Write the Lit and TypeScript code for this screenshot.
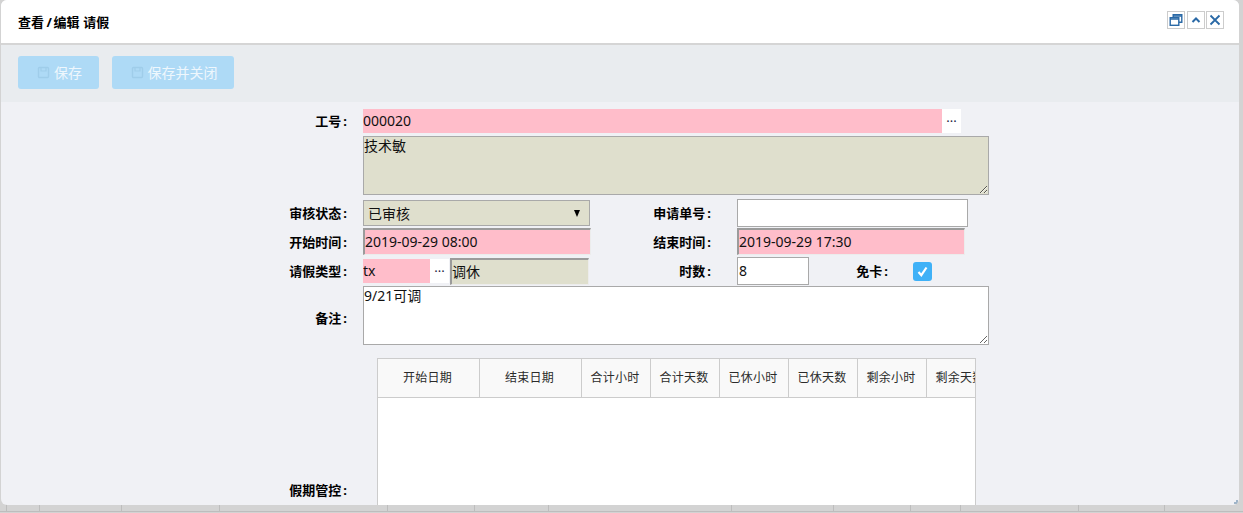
import { LitElement, html, css } from "lit";
import { customElement } from "lit/decorators.js";

const BACK_CELLS = [7, 33, 82, 98, 168, 87, 74, 183, 102, 77, 50, 118, 86, 79];
const HEADS: [string, boolean][] = [
  ["开始日期", true], ["结束日期", true], ["合计小时", false], ["合计天数", false],
  ["已休小时", false], ["已休天数", false], ["剩余小时", false], ["剩余天数", false],
];

@customElement("app-root")
export class AppRoot extends LitElement {
  static styles = css`
    :host {
      display: block;
      position: relative;
      width: 1243px;
      height: 513px;
      overflow: hidden;
      background: #d3d3d3;
      font-family: "Noto Sans", "Noto Sans CJK SC", sans-serif;
      font-size: 14px;
      color: #111;
    }
    .backdrop {
      display: flex;
      height: 511px;
      border-bottom: 1px solid #bdbdbd;
    }
    .back-cell { flex: none; border-right: 1px solid #bdbdbd; box-sizing: border-box; }
    .window {
      position: absolute;
      left: 1px;
      top: 0;
      width: 1238px;
      height: 505px;
      background: #f0f1f5;
      border-radius: 6px;
      overflow: hidden;
      display: flex;
      flex-direction: column;
    }
    .title {
      flex: none;
      height: 43px;
      box-sizing: content-box;
      background: #fff;
      border-bottom: 2px solid #d5d5d5;
      display: flex;
      align-items: center;
      justify-content: space-between;
      padding: 0 15px 0 17px;
    }
    .title-text { font-size: 13px; font-weight: 700; color: #000; word-spacing: 0.5px; }
    .slash { margin: 0 1.5px 0 2.5px; }
    .win-btns { display: flex; margin-bottom: 3px; }
    .win-btn {
      width: 16px;
      height: 16px;
      border: 1px solid #ccc;
      background: #fff;
      display: flex;
      align-items: center;
      justify-content: center;
      box-sizing: content-box;
      margin-left: 1px;
    }
    .win-btn.first { margin-left: 0; margin-right: 1px; }
    .win-btn svg { display: block; }
    .toolbar {
      flex: none;
      height: 57px;
      background: #e9ecef;
      display: flex;
      gap: 13px;
      padding: 11px 17px 0;
      box-sizing: border-box;
      align-items: flex-start;
    }
    .tool {
      height: 33px;
      background: #aedaf6;
      border-radius: 3px;
      display: flex;
      align-items: center;
      justify-content: center;
      gap: 4px;
      color: #eef7fd;
      font-size: 14px;
      padding: 0 0 0 2px;
      box-sizing: border-box;
    }
    .tool span { margin-top: -1px; }
    .tool.a { width: 81px; }
    .tool.b { width: 122px; }
    .form { flex: 1; min-height: 0; overflow: hidden; display: flex; flex-direction: column; }
    .row {
      display: grid;
      grid-template-columns: 348px 14px 227px 123px 24px 1fr;
      align-items: center;
      flex: none;
    }
    .label {
      font-size: 13px;
      font-weight: 700;
      color: #000;
      text-align: right;
      white-space: nowrap;
      padding-bottom: 2px;
    }
    .colon { margin: 0 2px; }
    .f1 { grid-column: 3; }
    .l2 { grid-column: 4; }
    .f2 { grid-column: 6; }
    .wide { grid-column: 3 / -1; }
    input, textarea, .select {
      font: inherit;
      color: #111;
      margin: 0;
      outline: none;
      box-sizing: border-box;
      display: block;
    }
    .plain { border: 1px solid #a9a9a9; background: #fff; padding: 0 1px 1px; }
    .pink { background: #ffbdca; border: none; padding: 0 0 2px; }
    .inset {
      border-style: solid;
      border-width: 2px 1px 1px 2px;
      border-color: #9b9b9b #ececec #ececec #9b9b9b;
      padding: 0 0 1px;
    }
    .inset.pinkbg { background: #ffbdca; align-self: start; }
    .inset.khaki { background: #dfdfcd; }
    .picker { display: flex; height: 24px; }
    .dots {
      width: 19px;
      background: #fff;
      display: flex;
      align-items: center;
      justify-content: center;
      font-size: 13px;
      line-height: 1;
      color: #224;
      padding-bottom: 7px;
      box-sizing: border-box;
      flex: none;
    }
    textarea {
      width: 626px;
      height: 59px;
      border: 1px solid #a9a9a9;
      padding: 0;
      line-height: 17px;
      resize: both;
      background: #fff;
    }
    textarea.khaki { background: #dfdfcd; }
    .select {
      width: 227px;
      height: 26px;
      background: #dfdfcd;
      border: 1px solid #a9a9a9;
      display: flex;
      align-items: center;
      justify-content: space-between;
      padding: 0 9px 1px 4px;
    }
    .arrow { width: 0; height: 0; border-left: 3.5px solid transparent; border-right: 3.5px solid transparent; border-top: 7px solid #000; margin-top: 1px; }
    .r1 { height: 24px; margin-top: 7px; }
    .r2 { height: 59px; margin-top: 3px; }
    .r3 { height: 28px; margin-top: 4px; }
    .r4 { height: 28px; margin-top: 1px; }
    .r5 { height: 28px; margin-top: 1px; }
    .r6 { height: 59px; margin-top: 1px; }
    .r6 .label { padding: 3px 0 0; }
    .r7 { height: 147px; margin-top: 13px; align-items: end; }
    .r7 .label { padding-bottom: 6px; }
    .mixed { display: flex; align-items: center; }
    .check-label { width: 81px; }
    .check {
      margin-left: 23px;
      width: 19px;
      height: 19px;
      border-radius: 3px;
      background: #3fb1f7;
      display: flex;
      align-items: center;
      justify-content: center;
    }
    .grid {
      grid-column: 3 / -1;
      margin-left: 14px;
      width: 599px;
      height: 147px;
      box-sizing: border-box;
      border: 1px solid #ccc;
      border-bottom: none;
      background: #fff;
      overflow: hidden;
    }
    .heads { display: flex; height: 38px; background: #f9f9f9; border-bottom: 1px solid #ccc; box-sizing: content-box; width: 800px; }
    .head {
      flex: none;
      width: 68px;
      border-right: 1px solid #ccc;
      display: flex;
      align-items: center;
      justify-content: center;
      font-size: 12px;
      letter-spacing: 0.3px;
      color: #2b2b2b;
      white-space: nowrap;
      padding-bottom: 3px;
      box-sizing: content-box;
    }
    .head span { margin-right: 2px; }
    .head.big { width: 101px; }
    .grip {
      position: absolute;
      right: 1px;
      bottom: 1px;
      width: 4px;
      height: 4px;
    }
  `;

  private disk(color: string) {
    return html`<svg width="13" height="13" viewBox="0 0 13 13"><path d="M1.5 2.5a1 1 0 0 1 1-1h8a1 1 0 0 1 1 1v8a1 1 0 0 1-1 1h-8a1 1 0 0 1-1-1z" fill="none" stroke="${color}" stroke-width="1.4"/><path d="M4 2v3h5V2" fill="none" stroke="${color}" stroke-width="1.2"/></svg>`;
  }

  private lab(text: string, cls = "") {
    return html`<div class="label ${cls}">${text}<span class="colon">:</span></div>`;
  }

  render() {
    return html`
      <div class="backdrop">
        ${BACK_CELLS.map((w) => html`<div class="back-cell" style="width:${w}px"></div>`)}
      </div>
      <div class="window">
        <div class="title">
          <span class="title-text">查看<span class="slash">/</span>编辑 请假</span>
          <div class="win-btns">
            <div class="win-btn first">
              <svg width="14" height="14" viewBox="0 0 14 14" fill="none" stroke="#2a69a6" stroke-width="1.4">
                <rect x="1.2" y="4.7" width="8.6" height="7.6" />
                <path d="M4.2 4.5V1.7h8.6v7.6H10" />
                <path d="M1.2 6h8.6M4.2 3h8.6" stroke-width="1.6" />
              </svg>
            </div>
            <div class="win-btn">
              <svg width="12" height="12" viewBox="0 0 12 12" fill="none" stroke="#2a69a6" stroke-width="2"><path d="M2.5 8 6 4.5 9.500 8" /></svg>
            </div>
            <div class="win-btn">
              <svg width="12" height="12" viewBox="0 0 12 12" fill="none" stroke="#2a69a6" stroke-width="1.8"><path d="M1.500 1.500l9 9M10.500 1.500l-9 9" /></svg>
            </div>
          </div>
        </div>
        <div class="toolbar">
          <div class="tool a">${this.disk("#9fcdea")}<span>保存</span></div>
          <div class="tool b">${this.disk("#9fcdea")}<span>保存并关闭</span></div>
        </div>
        <div class="form">
          <div class="row r1">
            ${this.lab("工号")}
            <div class="wide picker">
              <input class="pink" style="width:579px" .value=${"000020"} />
              <div class="dots">...</div>
            </div>
          </div>
          <div class="row r2">
            <div class="label"></div>
            <div class="wide"><textarea class="khaki" .value=${"技术敏"}></textarea></div>
          </div>
          <div class="row r3">
            ${this.lab("审核状态")}
            <div class="f1 select"><span>已审核</span><span class="arrow"></span></div>
            ${this.lab("申请单号", "l2")}
            <input class="f2 plain" style="width:231px;height:28px" />
          </div>
          <div class="row r4">
            ${this.lab("开始时间")}
            <input class="f1 inset pinkbg" style="width:228px;height:27px" .value=${"2019-09-29 08:00"} />
            ${this.lab("结束时间", "l2")}
            <input class="f2 inset pinkbg" style="width:228px;height:27px" .value=${"2019-09-29 17:30"} />
          </div>
          <div class="row r5">
            ${this.lab("请假类型")}
            <div class="f1 mixed">
              <input class="pink" style="width:67px;height:24px" .value=${"tx"} />
              <div class="dots" style="height:24px">...</div>
              <input class="inset khaki" style="width:139px;height:27px;margin-left:1px" .value=${"调休"} />
            </div>
            ${this.lab("时数", "l2")}
            <div class="f2 mixed">
              <input class="plain" style="width:72px;height:28px" .value=${"8"} />
              ${this.lab("免卡", "check-label")}
              <div class="check">
                <svg width="13" height="13" viewBox="0 0 13 13" fill="none" stroke="#fff" stroke-width="2.200"><path d="M2.500 7l2.800 3.200L10.500 2.500" /></svg>
              </div>
            </div>
          </div>
          <div class="row r6">
            ${this.lab("备注")}
            <div class="wide"><textarea .value=${"9/21可调"}></textarea></div>
          </div>
          <div class="row r7">
            ${this.lab("假期管控")}
            <div class="grid">
              <div class="heads">
                ${HEADS.map(([t, big]) => html`<div class="head ${big ? "big" : ""}"><span>${t}</span></div>`)}
              </div>
            </div>
          </div>
        </div>
        <svg class="grip" viewBox="0 0 4 4" fill="#9fb4c8"><rect x="2" y="0" width="2" height="2"/><rect x="0" y="2" width="2" height="2"/><rect x="2" y="2" width="2" height="2"/></svg>
      </div>
    `;
  }
}
